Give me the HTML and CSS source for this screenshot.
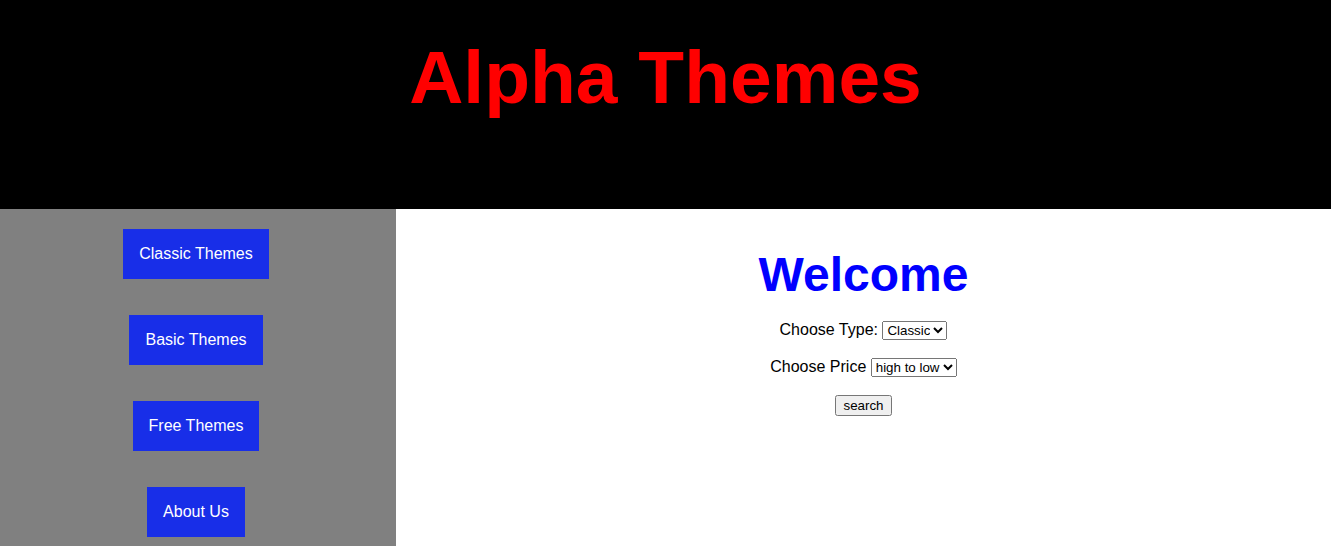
FILE: index.html
```html
<!DOCTYPE html>
<html lang="en">
<head>
<meta charset="utf-8">
<title>Alpha Themes</title>
<link rel="stylesheet" href="styles.css">
</head>
<body>
<header class="top">
  <h1 class="brand">Alpha Themes</h1>
</header>
<div class="layout">
  <nav class="side">
    <a class="navbtn" href="#">Classic Themes</a>
    <a class="navbtn" href="#">Basic Themes</a>
    <a class="navbtn" href="#">Free Themes</a>
    <a class="navbtn" href="#">About Us</a>
  </nav>
  <main class="content">
    <h2 class="welcome">Welcome</h2>
    <form class="finder">
      Choose Type: <select class="pick"><option>Classic</option><option>Basic</option><option>Free</option></select><br><br>
      Choose Price <select class="pick"><option>high to low</option><option>low to high</option></select><br><br>
      <input class="go" type="button" value="search">
    </form>
  </main>
</div>
</body>
</html>
```
FILE: styles.css
```css
html, body {
  margin: 0;
  padding: 0;
}
body {
  font-family: "Liberation Sans", Arial, sans-serif;
  font-size: 16px;
  overflow: hidden;
}
.top {
  background: #000;
  height: 209px;
  box-sizing: border-box;
  padding-top: 40px;
  text-align: center;
}
.brand {
  margin: 0;
  color: #ff0000;
  font-size: 75px;
  line-height: 75px;
  font-weight: bold;
}
.layout {
  display: flex;
  height: 337px;
}
.side {
  width: 396px;
  background: #808080;
  box-sizing: border-box;
  padding: 20px 4px 0 0;
  display: flex;
  flex-direction: column;
  align-items: center;
  gap: 36px;
}
.navbtn {
  display: block;
  background: #182ee8;
  color: #fff;
  text-decoration: none;
  height: 50px;
  line-height: 50px;
  padding: 0 16px;
  font-size: 16px;
}
.content {
  flex: 1;
  background: #fff;
  text-align: center;
  padding-top: 42px;
}
.welcome {
  margin: 0 0 22px;
  color: #0000ff;
  font-size: 48px;
  line-height: 48px;
  font-weight: bold;
}
.finder {
  margin: 0;
  color: #000;
}
.pick, .go {
  font-family: "Liberation Sans", Arial, sans-serif;
  font-size: 13.33px;
}
```
